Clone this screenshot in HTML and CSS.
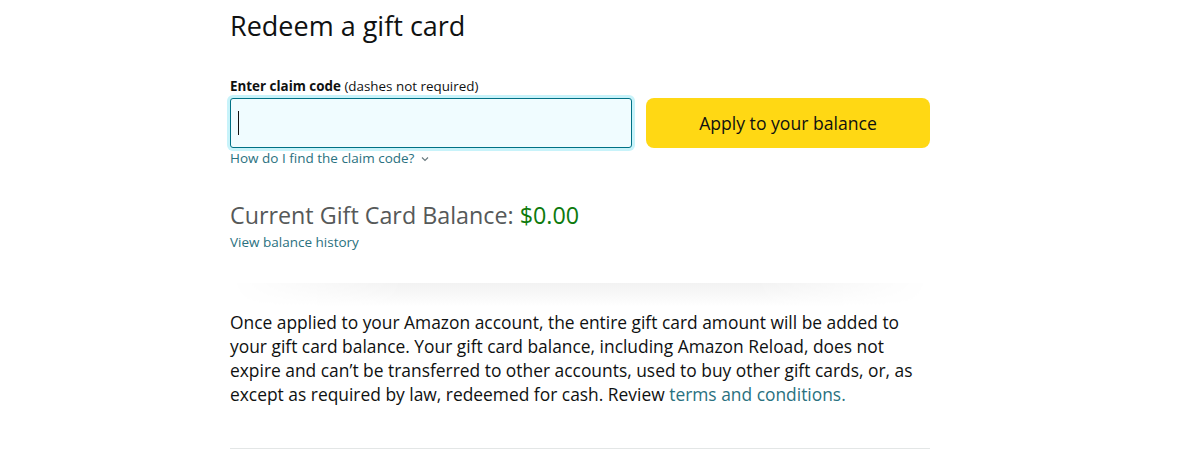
FILE: index.html
```html
<!DOCTYPE html>
<html>
<head>
<meta charset="utf-8">
<link rel="stylesheet" href="styles.css">
</head>
<body>
<main class="page">
  <h1 class="title">Redeem a gift card</h1>
  <div class="label"><b>Enter claim code</b> (dashes not required)</div>
  <div class="form-row">
    <div class="input"><span class="caret"></span></div>
    <button class="apply">Apply to your balance</button>
  </div>
  <a class="link help">How do I find the claim code? <svg class="chev" width="8" height="6" viewBox="0 0 8 6"><path d="M1 1.5 L4 4.5 L7 1.5" fill="none" stroke="#6b7b80" stroke-width="1.2"/></svg></a>
  <div class="balance">Current Gift Card Balance: <span class="amount">$0.00</span></div>
  <a class="link history">View balance history</a>
  <div class="divider"></div>
  <p class="info">Once applied to your Amazon account, the entire gift card amount will be added to your gift card balance. Your gift card balance, including Amazon Reload, does not expire and can’t be transferred to other accounts, used to buy other gift cards, or, as except as required by law, redeemed for cash. Review <span class="terms">terms and conditions.</span></p>
  <div class="bottom-rule"></div>
</main>
</body>
</html>
```
FILE: styles.css
```css
* { box-sizing: border-box; }
body { margin: 0; background: #fff; font-family: "Open Sans", "Liberation Sans", sans-serif; color: #0f1111; }
.page { width: 700px; margin-left: 230px; display: flex; flex-direction: column; }
.title { font-size: 27px; font-weight: 400; margin: 8px 0 0; line-height: 36px; }
.label { font-size: 13.4px; margin-top: 33px; line-height: 18px; }
.label b { font-weight: 700; }
.form-row { display: flex; gap: 14px; margin-top: 3px; }
.input { width: 402px; height: 50px; border: 1px solid #007185; border-radius: 3px; background: #f0fcff; box-shadow: 0 0 0 3px #c8f3fa; display: flex; align-items: center; padding-left: 7px; }
.caret { width: 1px; height: 24px; background: #111; }
.apply { flex: 1; height: 50px; border: none; border-radius: 8px; background: #ffd814; font-family: inherit; font-size: 17.6px; color: #0f1111; }
.link { color: #2a7180; font-size: 13.5px; line-height: 18px; }
.help { margin-top: 1px; display: flex; align-items: center; gap: 7px; }
.chev { margin-top: 1px; }
.balance { font-size: 23.3px; color: #565959; margin-top: 32px; line-height: 32px; }
.amount { color: #0d7a0d; }
.history { margin-top: 2px; }
.divider { height: 24px; margin-top: 32px; background: linear-gradient(to bottom, #f2f2f2, #fff); -webkit-mask: linear-gradient(to right, transparent, #000 25%, #000 75%, transparent); mask: linear-gradient(to right, transparent, #000 25%, #000 75%, transparent); }
.info { font-size: 17.4px; line-height: 24px; margin: 3px 0 0; }
.terms { color: #2a7180; }
.bottom-rule { height: 1px; background: #e3e6e6; margin-top: 42px; }
```
